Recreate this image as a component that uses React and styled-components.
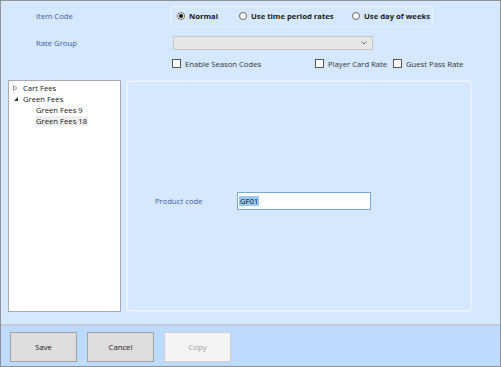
import React from "react";
import styled, { createGlobalStyle } from "styled-components";

const Global = createGlobalStyle`
  html, body { margin: 0; padding: 0; background: #d6e8fe; }
  body { font-family: "Open Sans", "Noto Sans", sans-serif; }
`;

const Window = styled.div`
  width: 501px;
  height: 367px;
  box-sizing: border-box;
  border: 1px solid #8e9297;
  background: #d6e8fe;
  display: flex;
  flex-direction: column;
  font-size: 7.7px;
  color: #222;
  white-space: nowrap;
`;

const Main = styled.div`
  flex: 1;
  display: flex;
  flex-direction: column;
  padding: 4px 0 0 6px;
`;

const FormRow = styled.div`
  display: grid;
  grid-template-columns: 163px 1fr;
  align-items: center;
  height: ${(p) => p.$h}px;
  margin-top: ${(p) => p.$mt || 0}px;
`;

const Label = styled.span`
  padding-left: 29px;
  color: #3b5998;
`;

const RadioBox = styled.div`
  width: 263px;
  height: 21px;
  box-sizing: border-box;
  border: 1px solid #e9f1fb;
  border-radius: 3px;
  display: flex;
  align-items: center;
  padding-left: 6px;
`;

const RadioItem = styled.label`
  display: flex;
  align-items: center;
  gap: 4px;
  font-weight: 700;
  color: #1a1a1a;
  width: ${(p) => p.$w}px;
  flex-shrink: 0;
`;

const RadioCircle = styled.span`
  width: 8px;
  height: 8px;
  flex-shrink: 0;
  box-sizing: border-box;
  border-radius: 50%;
  border: 1px solid #666;
  background: #fff;
  display: flex;
  align-items: center;
  justify-content: center;
  &::after {
    content: "";
    width: 4px;
    height: 4px;
    border-radius: 50%;
    background: ${(p) => (p.$on ? "#111" : "transparent")};
  }
`;

const Combo = styled.div`
  margin-left: 3px;
  width: 200px;
  height: 14px;
  box-sizing: border-box;
  border: 1px solid #c5c5c5;
  background: #e6e6e6;
  display: flex;
  justify-content: flex-end;
  align-items: center;
  padding-right: 5px;
`;

const CheckRow = styled.div`
  display: flex;
  align-items: center;
  height: 13px;
  padding-left: 165px;
  margin-top: 2px;
`;

const CheckItem = styled.label`
  display: flex;
  align-items: center;
  gap: 4px;
  color: #333;
  width: ${(p) => (p.$w ? `${p.$w}px` : "auto")};
  flex-shrink: 0;
`;

const Box = styled.span`
  width: 9px;
  height: 9px;
  flex-shrink: 0;
  box-sizing: border-box;
  border: 1px solid #555;
  background: #fff;
`;

const Panels = styled.div`
  display: flex;
  gap: 5px;
  margin-top: 10px;
  height: 232px;
  padding-left: 1px;
`;

const Tree = styled.div`
  width: 113px;
  box-sizing: border-box;
  background: #fff;
  border: 1px solid #a9adb3;
  padding: 1px 0 0 4px;
  display: flex;
  flex-direction: column;
  color: #1a1a1a;
`;

const TreeItem = styled.div`
  height: 11px;
  display: flex;
  align-items: center;
  padding-left: ${(p) => p.$indent}px;
`;

const Arrow = styled.span`
  width: 9px;
  display: flex;
  align-items: center;
`;

const TreeText = styled.span`
  padding: 0 1px;
  background: ${(p) => (p.$sel ? "#eeeeee" : "transparent")};
`;

const Detail = styled.div`
  width: 346px;
  box-sizing: border-box;
  border: 2px solid #e8f0fa;
  border-radius: 3px;
  display: flex;
  align-items: center;
  padding-left: 27px;
  padding-top: 10px;
`;

const FieldLabel = styled.span`
  width: 82px;
  color: #3b5998;
`;

const Input = styled.div`
  width: 134px;
  height: 18px;
  box-sizing: border-box;
  border: 1px solid #7aa7da;
  background: #fff;
  display: flex;
  align-items: center;
  padding-left: 1px;
  color: #111;
`;

const Selected = styled.span`
  background: #99c9ef;
  padding: 0 1px;
`;

const Footer = styled.div`
  height: 39px;
  border-top: 2px solid #c3ccd6;
  background: #bddbff;
  display: flex;
  align-items: center;
  gap: 10px;
  padding: 1px 0 0 9px;
`;

const Button = styled.div`
  width: 67px;
  height: 30px;
  box-sizing: border-box;
  border: 1px solid ${(p) => (p.$disabled ? "#cfcfcf" : "#a3a3a3")};
  background: ${(p) => (p.$disabled ? "#f4f4f4" : "#dddddd")};
  color: ${(p) => (p.$disabled ? "#a0a0a0" : "#222")};
  display: flex;
  align-items: center;
  justify-content: center;
`;

export default function App() {
  return (
    <>
      <Global />
      <Window>
        <Main>
          <FormRow $h={22}>
            <Label>Item Code</Label>
            <RadioBox>
              <RadioItem $w={62}>
                <RadioCircle $on />
                Normal
              </RadioItem>
              <RadioItem $w={113}>
                <RadioCircle />
                Use time period rates
              </RadioItem>
              <RadioItem $w={76}>
                <RadioCircle />
                Use day of weeks
              </RadioItem>
            </RadioBox>
          </FormRow>
          <FormRow $h={24} $mt={4}>
            <Label>Rate Group</Label>
            <Combo>
              <svg width="6" height="4" viewBox="0 0 6 4">
                <path d="M0.5 0.5 L3 3 L5.5 0.5" fill="none" stroke="#777" strokeWidth="1" />
              </svg>
            </Combo>
          </FormRow>
          <CheckRow>
            <CheckItem $w={143}>
              <Box />
              Enable Season Codes
            </CheckItem>
            <CheckItem $w={78}>
              <Box />
              Player Card Rate
            </CheckItem>
            <CheckItem>
              <Box />
              Guest Pass Rate
            </CheckItem>
          </CheckRow>
          <Panels>
            <Tree>
              <TreeItem $indent={0}>
                <Arrow>
                  <svg width="5" height="6" viewBox="0 0 5 6">
                    <path d="M0.5 0.5 L4 3 L0.5 5.5 Z" fill="none" stroke="#999" strokeWidth="1" />
                  </svg>
                </Arrow>
                <TreeText>Cart Fees</TreeText>
              </TreeItem>
              <TreeItem $indent={0}>
                <Arrow>
                  <svg width="6" height="6" viewBox="0 0 6 6">
                    <path d="M5 1 L5 5 L1 5 Z" fill="#333" />
                  </svg>
                </Arrow>
                <TreeText>Green Fees</TreeText>
              </TreeItem>
              <TreeItem $indent={22}>
                <TreeText>Green Fees 9</TreeText>
              </TreeItem>
              <TreeItem $indent={22}>
                <TreeText $sel>Green Fees 18</TreeText>
              </TreeItem>
            </Tree>
            <Detail>
              <FieldLabel>Product code</FieldLabel>
              <Input>
                <Selected>GF01</Selected>
              </Input>
            </Detail>
          </Panels>
        </Main>
        <Footer>
          <Button>Save</Button>
          <Button>Cancel</Button>
          <Button $disabled>Copy</Button>
        </Footer>
      </Window>
    </>
  );
}
